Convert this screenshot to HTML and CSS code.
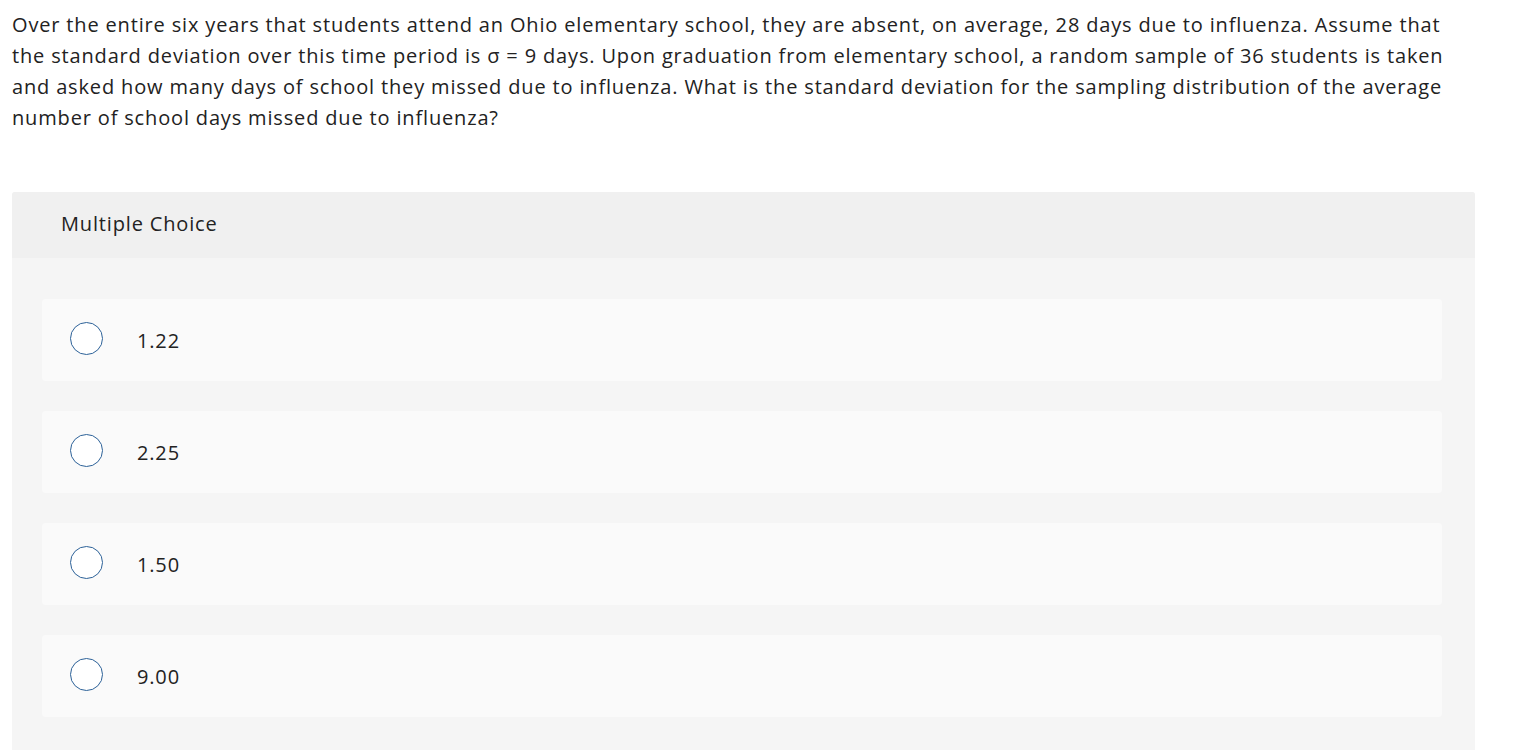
FILE: index.html
```html
<!DOCTYPE html>
<html>
<head>
<meta charset="utf-8">
<link rel="stylesheet" href="styles.css">
</head>
<body>
<div class="page">
  <p class="question">Over the entire six years that students attend an Ohio elementary school, they are absent, on average, 28 days due to influenza. Assume that<br>the standard deviation over this time period is σ = 9 days. Upon graduation from elementary school, a random sample of 36 students is taken<br>and asked how many days of school they missed due to influenza. What is the standard deviation for the sampling distribution of the average<br>number of school days missed due to influenza?</p>
  <div class="panel">
    <div class="panel-head">Multiple Choice</div>
    <div class="panel-body">
      <div class="option"><span class="radio"></span><span class="label">1.22</span></div>
      <div class="option"><span class="radio"></span><span class="label">2.25</span></div>
      <div class="option"><span class="radio"></span><span class="label">1.50</span></div>
      <div class="option"><span class="radio"></span><span class="label">9.00</span></div>
    </div>
  </div>
</div>
</body>
</html>
```
FILE: styles.css
```css
html, body {
  margin: 0;
  padding: 0;
  background: #ffffff;
}
body {
  font-family: "Open Sans", "Lato", sans-serif;
  color: #222222;
  letter-spacing: 0.84px;
}
.page {
  padding: 9px 40px 0 12px;
}
.question {
  margin: 0;
  font-size: 20px;
  line-height: 31px;
  white-space: nowrap;
}
.panel {
  margin-top: 59px;
  width: 1463px;
  border-radius: 3px 3px 0 0;
  overflow: hidden;
  background: #f5f5f5;
}
.panel-head {
  height: 66px;
  box-sizing: border-box;
  display: flex;
  align-items: center;
  padding: 0 0 3px 49px;
  background: #f0f0f0;
  font-size: 20px;
}
.panel-body {
  display: flex;
  flex-direction: column;
  gap: 30px;
  padding: 41px 33px 40px 30px;
}
.option {
  height: 82px;
  display: flex;
  align-items: center;
  background: #fafafa;
  border-radius: 4px;
  padding-left: 28px;
}
.radio {
  width: 31px;
  height: 31px;
  border: 1.5px solid #2c6198;
  border-radius: 50%;
  background: #ffffff;
  flex: none;
  margin-top: -4px;
}
.label {
  margin-left: 34px;
  font-size: 20px;
  padding-top: 1px;
}
```
